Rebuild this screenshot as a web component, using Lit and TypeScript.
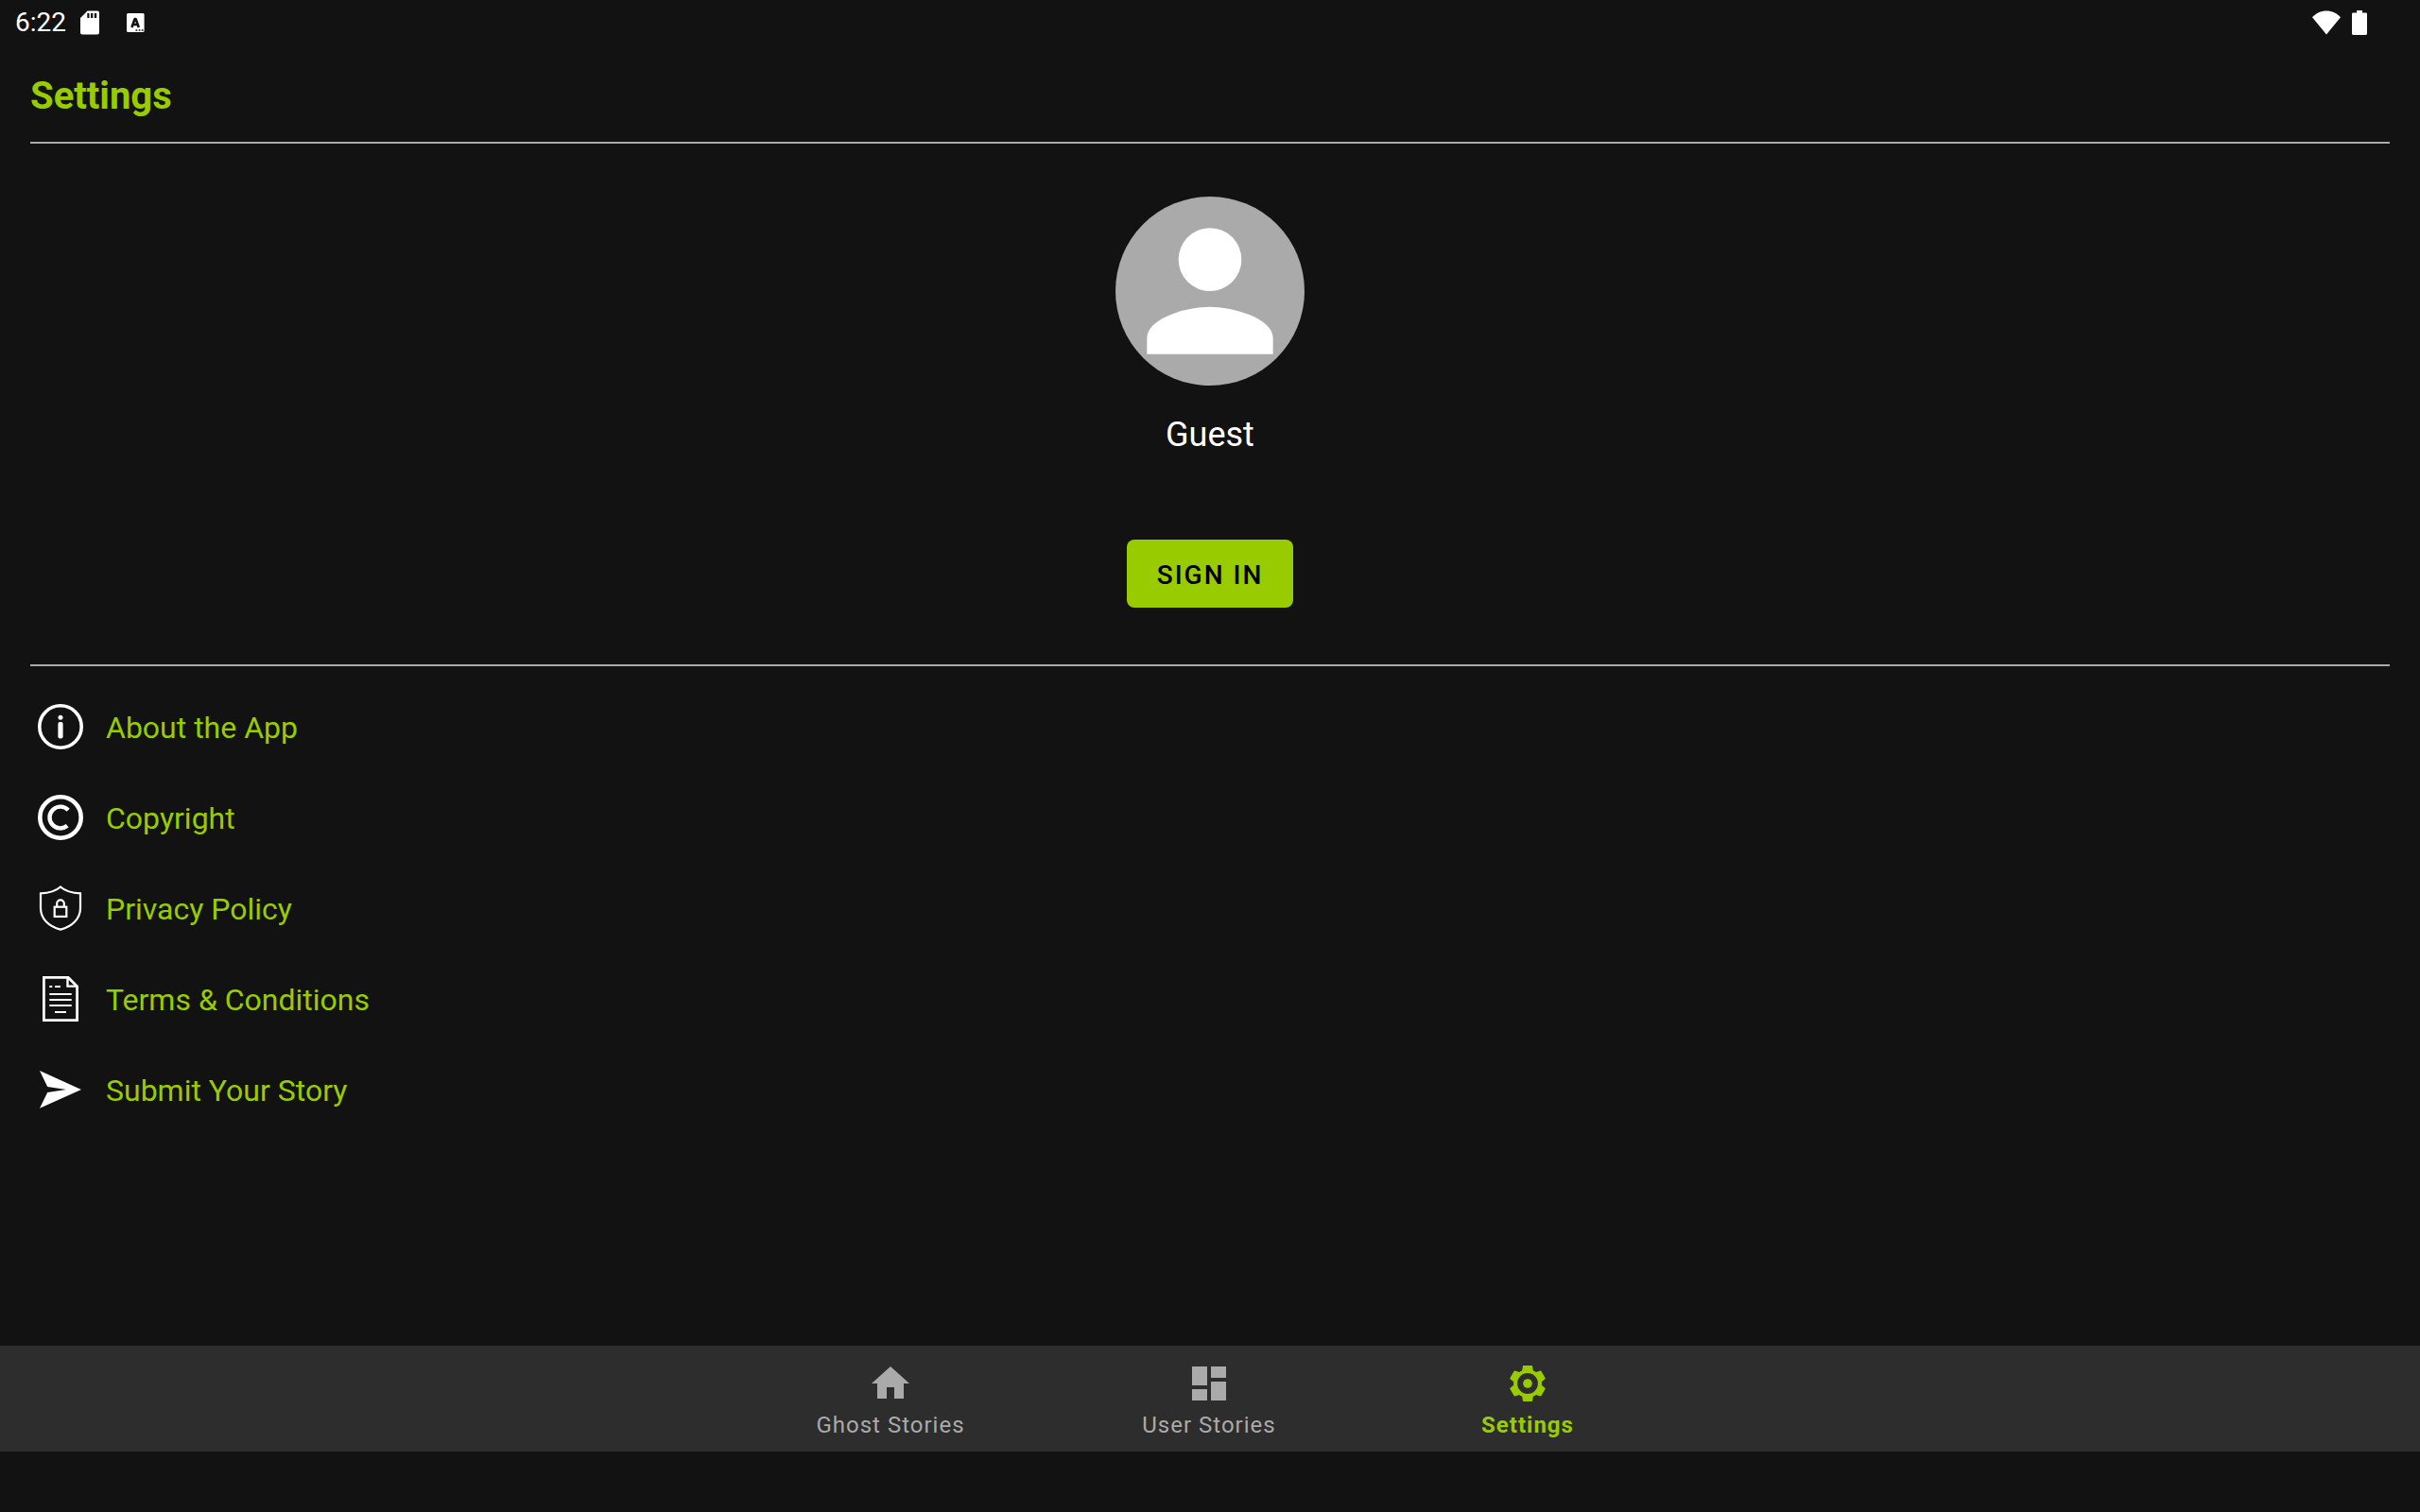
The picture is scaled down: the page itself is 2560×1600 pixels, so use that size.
import { LitElement, css, html, svg } from "lit";
import { customElement, property } from "lit/decorators.js";
import { classMap } from "lit/directives/class-map.js";

const infoIcon = svg`<svg viewBox="0 0 48 48" aria-hidden="true">
  <circle cx="24" cy="24" r="22.2" fill="none" stroke="currentColor" stroke-width="3.6"/>
  <circle cx="24" cy="14.3" r="2.5" fill="currentColor"/>
  <rect x="21.4" y="19" width="5.2" height="17.4" rx="2" fill="currentColor"/>
</svg>`;

const copyrightIcon = svg`<svg viewBox="0 0 48 48" aria-hidden="true" fill="none" stroke="currentColor">
  <circle cx="24" cy="24" r="21.7" stroke-width="4.6"/>
  <path stroke-width="4.4" d="M32.2 16.2A11.4 11.4 0 1 0 31.2 32.8"/>
</svg>`;

const shieldIcon = svg`<svg viewBox="0 0 48 48" aria-hidden="true" fill="none" stroke="currentColor" stroke-width="2.2">
  <path d="M24 1.5C19 6 12 8 3 8.3V24C3 35.5 12 43.5 24 46.6C36 43.5 45 35.5 45 24V8.3C36 8 29 6 24 1.5Z"/>
  <rect x="17.7" y="22.7" width="12.6" height="10.2"/>
  <path d="M20.2 22.5V19.2a3.8 3.8 0 0 1 7.6 0V22.5"/>
</svg>`;

const documentIcon = svg`<svg viewBox="0 0 48 48" aria-hidden="true" fill="none" stroke="currentColor">
  <path stroke-width="2.8" d="M6.4 1.4H32.2L41.6 10.8V46.6H6.4Z"/>
  <path stroke-width="2.4" d="M31.5 1V10.6H42"/>
  <path stroke-width="2" d="M12.3 11h3M18 11h6M12.3 19h23.4M12.3 25h23.4M12.3 31h23.4M18 38h12"/>
</svg>`;

const sendIcon = svg`<svg viewBox="0 0 48 48" aria-hidden="true">
  <path fill="currentColor" d="M2 4L46 24L2 43.8L10.2 27L30 24L10.2 21Z"/>
</svg>`;

const homeIcon = svg`<svg viewBox="0 0 24 24" aria-hidden="true">
  <path fill="currentColor" d="M10 20v-6h4v6h5v-8h3L12 3 2 12h3v8z"/>
</svg>`;

const dashboardIcon = svg`<svg viewBox="0 0 24 24" aria-hidden="true">
  <path fill="currentColor" d="M3 13h8V3H3v10zm0 8h8v-6H3v6zm10 0h8V11h-8v10zm0-18v6h8V3h-8z"/>
</svg>`;

const gearIcon = svg`<svg viewBox="-24 -24 48 48" aria-hidden="true" fill="currentColor">
  <circle r="12.8" fill="none" stroke="currentColor" stroke-width="3.8"/>
  ${[0, 60, 120, 180, 240, 300].map(
    (angle) => svg`<path transform="rotate(${angle})" d="M-4.4 -19H4.4L5 -18.4L5.9 -13.6L8 -12H-8L-5.9 -13.6L-5 -18.4Z"/>`
  )}
  <circle r="4.8"/>
</svg>`;

@customElement("status-bar")
export class StatusBar extends LitElement {
  static styles = css`
    :host {
      display: flex;
      align-items: center;
      justify-content: space-between;
      height: 48px;
      padding: 0 56px 0 16px;
      color: #fff;
      font-size: 28px;
      line-height: 32px;
    }
    .group {
      display: flex;
      align-items: center;
    }
    .start {
      gap: 15px;
    }
    .end {
      gap: 12px;
    }
    .alert {
      margin-left: 13px;
    }
    svg {
      display: block;
      fill: currentColor;
    }
  `;

  render() {
    return html`
      <div class="group start">
        <time>6:22</time>
        <svg width="20" height="26" viewBox="0 0 20 26" aria-hidden="true">
          <path fill-rule="evenodd" d="M7.5 .5H18a2 2 0 0 1 2 2V23.5a2 2 0 0 1-2 2H2a2 2 0 0 1-2-2V8ZM7.3 3v5H9.5V3ZM11 3v5H13.3V3ZM14.8 3v5H17.2V3Z"/>
        </svg>
        <svg class="alert" width="20" height="20" viewBox="0 0 20 20" aria-hidden="true">
          <rect x="1" width="18.6" height="20" rx="1.5"/>
          <path fill="none" stroke="#121212" stroke-width="2.6" stroke-linejoin="bevel" d="M6.4 15L9.6 6H10.6L13.8 15M7.5 12H12.5"/>
          <path fill="#121212" d="M10.5 17.2h1.8v1.6h-1.8zM13.7 17.2h1.8v1.6h-1.8zM16.8 17.2h1.8v1.6h-1.8z"/>
        </svg>
      </div>
      <div class="group end">
        <svg width="30" height="26" viewBox="0 0 30 26" aria-hidden="true">
          <path d="M0 7.3C4 3 9 .4 15 .4S26 3 30 7.3L15 25.4Z"/>
        </svg>
        <svg width="16" height="26" viewBox="0 0 16 26" aria-hidden="true">
          <path d="M5 0h6v2.4h3.6A1.4 1.4 0 0 1 16 3.8V24.6A1.4 1.4 0 0 1 14.6 26H1.4A1.4 1.4 0 0 1 0 24.6V3.8A1.4 1.4 0 0 1 1.4 2.4H5Z"/>
        </svg>
      </div>
    `;
  }
}

@customElement("profile-panel")
export class ProfilePanel extends LitElement {
  @property() name = "";

  static styles = css`
    :host {
      display: flex;
      flex-direction: column;
      align-items: center;
      padding: 56px 0 60px;
    }
    .avatar {
      display: block;
      width: 200px;
      height: 200px;
    }
    .name {
      margin: 30px 0 89px;
      color: #fff;
      font-size: 36px;
      line-height: 44px;
    }
    .sign-in {
      height: 72px;
      padding: 2px 32px 0;
      border: 0;
      border-radius: 8px;
      background: #99cc00;
      color: #000;
      font-family: inherit;
      font-size: 28px;
      font-weight: 500;
      letter-spacing: 2px;
      cursor: pointer;
    }
  `;

  render() {
    return html`
      <svg class="avatar" viewBox="0 0 24 24" aria-hidden="true">
        <circle cx="12" cy="12" r="12" fill="#aaa"/>
        <circle cx="12" cy="8" r="4" fill="#fff"/>
        <path fill="#fff" d="M4 18c0-2.66 5.33-4 8-4s8 1.34 8 4v2H4z"/>
      </svg>
      <p class="name">${this.name}</p>
      <button class="sign-in" type="button">SIGN IN</button>
    `;
  }
}

@customElement("settings-menu")
export class SettingsMenu extends LitElement {
  static styles = css`
    .list {
      margin: 0;
      padding: 16px 0;
      list-style: none;
    }
    .link {
      display: flex;
      align-items: center;
      gap: 24px;
      height: 96px;
      padding: 0 8px;
      color: #99cc00;
      font-size: 32px;
      line-height: 40px;
      text-decoration: none;
    }
    .icon {
      width: 48px;
      height: 48px;
      color: #fff;
    }
    .label {
      padding-top: 2px;
    }
    svg {
      display: block;
    }
  `;

  private entries = [
    { id: "about", label: "About the App", icon: infoIcon },
    { id: "copyright", label: "Copyright", icon: copyrightIcon },
    { id: "privacy", label: "Privacy Policy", icon: shieldIcon },
    { id: "terms", label: "Terms & Conditions", icon: documentIcon },
    { id: "submit", label: "Submit Your Story", icon: sendIcon },
  ];

  render() {
    return html`
      <ul class="list">
        ${this.entries.map(
          (entry) => html`<li>
            <a class="link" href="#${entry.id}"
              ><span class="icon">${entry.icon}</span><span class="label">${entry.label}</span></a
            >
          </li>`
        )}
      </ul>
    `;
  }
}

@customElement("bottom-nav")
export class BottomNav extends LitElement {
  @property() active = "";

  static styles = css`
    :host {
      display: block;
      background: #2d2d2d;
    }
    .bar {
      display: flex;
      justify-content: center;
      padding-right: 2px;
    }
    .tab {
      display: flex;
      flex: 0 1 337px;
      flex-direction: column;
      align-items: center;
      gap: 6px;
      padding: 16px 0 14px;
      color: #aaa;
      font-size: 24px;
      line-height: 28px;
      letter-spacing: 1px;
      text-decoration: none;
    }
    .selected {
      color: #99cc00;
      font-weight: 700;
    }
    .icon {
      width: 48px;
      height: 48px;
    }
    svg {
      display: block;
    }
  `;

  private tabs = [
    { id: "ghost", label: "Ghost Stories", icon: homeIcon },
    { id: "user", label: "User Stories", icon: dashboardIcon },
    { id: "settings", label: "Settings", icon: gearIcon },
  ];

  render() {
    return html`
      <nav class="bar">
        ${this.tabs.map(
          (tab) => html`<a
            class=${classMap({ tab: true, selected: tab.id === this.active })}
            href="#${tab.id}"
            ><span class="icon">${tab.icon}</span><span>${tab.label}</span></a
          >`
        )}
      </nav>
    `;
  }
}

@customElement("app-root")
export class AppRoot extends LitElement {
  static styles = css`
    :host {
      display: flex;
      flex-direction: column;
      box-sizing: border-box;
      min-height: 100vh;
      padding-bottom: 64px;
      background: #121212;
      font-family: Roboto, "Liberation Sans", sans-serif;
    }
    .content {
      flex: 1;
      padding: 0 32px;
    }
    .title {
      margin: 0;
      padding: 30px 0 24px;
      color: #99cc00;
      font-size: 40px;
      font-weight: 700;
      line-height: 48px;
    }
    .rule {
      height: 2px;
      margin: 0;
      border: 0;
      background: #aaa;
    }
  `;

  render() {
    return html`
      <status-bar></status-bar>
      <main class="content">
        <h1 class="title">Settings</h1>
        <hr class="rule" />
        <profile-panel name="Guest"></profile-panel>
        <hr class="rule" />
        <settings-menu></settings-menu>
      </main>
      <bottom-nav active="settings"></bottom-nav>
    `;
  }
}
